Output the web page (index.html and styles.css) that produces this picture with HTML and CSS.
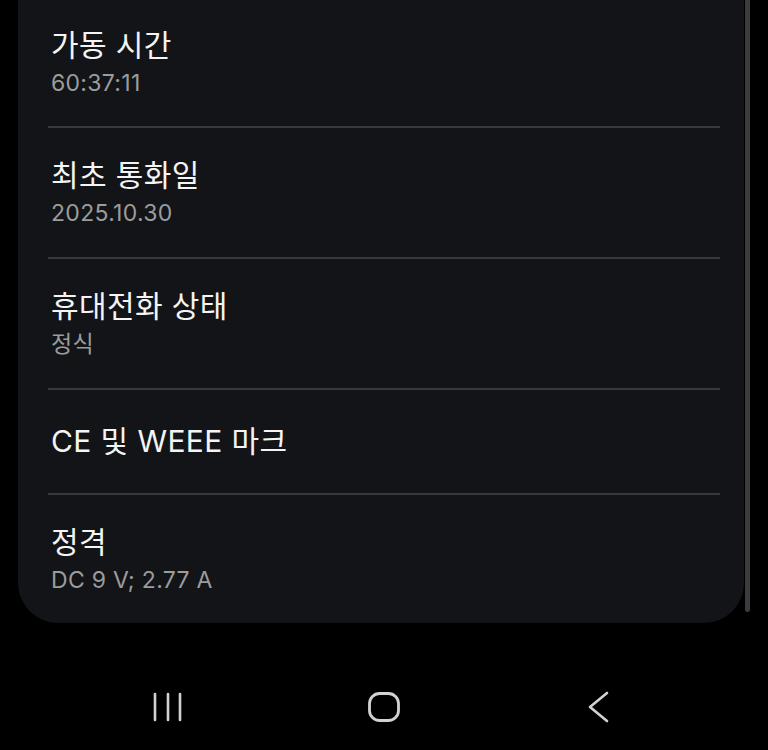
FILE: index.html
```html
<!DOCTYPE html>
<html lang="ko">
<head>
<meta charset="utf-8">
<title>휴대전화 정보</title>
<link rel="stylesheet" href="styles.css">
</head>
<body>
<div class="screen">
  <div class="content">
    <div class="card">
      <div class="row first">
        <div class="title">가동 시간</div>
        <div class="sub">60:37:11</div>
      </div>
      <div class="divider"></div>
      <div class="row">
        <div class="title">최초 통화일</div>
        <div class="sub">2025.10.30</div>
      </div>
      <div class="divider"></div>
      <div class="row">
        <div class="title">휴대전화 상태</div>
        <div class="sub">정식</div>
      </div>
      <div class="divider"></div>
      <div class="row single">
        <div class="title">CE 및 WEEE 마크</div>
      </div>
      <div class="divider"></div>
      <div class="row last">
        <div class="title">정격</div>
        <div class="sub">DC 9 V; 2.77 A</div>
      </div>
    </div>
    <div class="scrollbar"></div>
  </div>
  <nav class="navbar">
    <svg class="nav-icon" width="40" height="40" viewBox="0 0 40 40">
      <g stroke="#d2d2d2" stroke-width="2.6" stroke-linecap="round" fill="none">
        <line x1="7" y1="7" x2="7" y2="33"/>
        <line x1="20" y1="7" x2="20" y2="33"/>
        <line x1="32" y1="7" x2="32" y2="33"/>
      </g>
    </svg>
    <svg class="nav-icon" width="40" height="40" viewBox="0 0 40 40">
      <rect x="5.5" y="6.5" width="29" height="27" rx="10" ry="10" stroke="#d2d2d2" stroke-width="2.8" fill="none"/>
    </svg>
    <svg class="nav-icon" width="40" height="40" viewBox="0 0 40 40">
      <polyline points="28,6 11,20 28,34" stroke="#d2d2d2" stroke-width="2.6" stroke-linecap="round" stroke-linejoin="round" fill="none"/>
    </svg>
  </nav>
</div>
</body>
</html>
```
FILE: styles.css
```css
* { box-sizing: border-box; }
html, body {
  margin: 0;
  padding: 0;
  background: #000;
}
body {
  font-family: "Inter", "Noto Sans CJK KR", sans-serif;
  width: 768px;
  height: 750px;
  overflow: hidden;
}
.screen {
  display: flex;
  flex-direction: column;
  height: 750px;
}
.content {
  display: flex;
  align-items: flex-start;
  padding-left: 18px;
}
.card {
  width: 726px;
  background: #121418;
  border-radius: 0 0 40px 40px;
  padding: 0 24px 0 30px;
}
.scrollbar {
  width: 5px;
  height: 612px;
  background: #3c3c3e;
  border-radius: 0 0 3px 3px;
  margin-left: 1px;
}
.row {
  padding: 29px 0 29px 3px;
  display: flex;
  flex-direction: column;
  gap: 5px;
}
.row.first { padding-top: 27px; padding-bottom: 28px; }
.row.single { padding: 33px 0 34px 3px; }
.row.last { padding-bottom: 28px; }
.title {
  font-size: 30px;
  line-height: 36px;
  letter-spacing: 0.4px;
  color: #f4f4f4;
}
.sub {
  font-size: 23px;
  line-height: 30px;
  letter-spacing: 0.3px;
  color: #9c9c9c;
}
.divider {
  height: 2px;
  background: #37393c;
}
.navbar {
  display: flex;
  justify-content: space-between;
  width: 471px;
  margin: 64px 0 0 148px;
}
.nav-icon { display: block; }
```
